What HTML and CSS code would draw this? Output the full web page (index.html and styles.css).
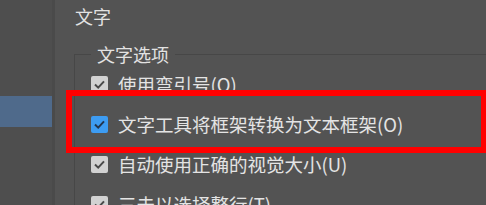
FILE: index.html
```html
<!DOCTYPE html>
<html lang="zh-CN">
    <head>
        <meta charset="UTF-8" />
        <title>首选项 - 文字</title>
        <link rel="stylesheet" href="styles.css">
    </head>
    <body>
        <div class="window">
            <div class="sidebar">
                <div class="side-item selected"></div>
            </div>
            <div class="divider"></div>
            <div class="panel">
                <div class="panel-title">文字</div>
                <fieldset class="group">
                    <legend>文字选项</legend>
                    <label class="option">
                        <span class="check"><svg viewBox="0 0 17 17"><path d="M4 8.5 L7.2 11.6 L13 5.4" /></svg></span>
                        使用弯引号(Q)
                    </label>
                    <label class="option">
                        <span class="check active"><svg viewBox="0 0 17 17"><path d="M4 8.5 L7.2 11.6 L13 5.4" /></svg></span>
                        文字工具将框架转换为文本框架(O)
                    </label>
                    <label class="option">
                        <span class="check"><svg viewBox="0 0 17 17"><path d="M4 8.5 L7.2 11.6 L13 5.4" /></svg></span>
                        自动使用正确的视觉大小(U)
                    </label>
                    <label class="option">
                        <span class="check"><svg viewBox="0 0 17 17"><path d="M4 8.5 L7.2 11.6 L13 5.4" /></svg></span>
                        三击以选择整行(T)
                    </label>
                </fieldset>
            </div>
        </div>
        <div class="highlight"></div>
    </body>
</html>
```

FILE: styles.css
```css
* {
    margin: 0;
    padding: 0;
    box-sizing: border-box;
    font-family: "Noto Sans CJK SC", "Noto Sans", sans-serif;
}

body {
    width: 486px;
    height: 205px;
    overflow: hidden;
    background: #535353;
    position: relative;
}

.window {
    display: flex;
    height: 205px;
}

.sidebar {
    width: 52px;
    background: #4e4e4e;
    padding-top: 96px;
}

.side-item {
    height: 31px;
}

.side-item.selected {
    background: #4f6a8b;
}

.divider {
    width: 3px;
    background: #4a4a4a;
}

.panel {
    flex: 1;
    padding: 4px 0 0 19px;
}

.panel-title {
    height: 24px;
    line-height: 24px;
    font-size: 18px;
    color: #e2e2e2;
    margin-left: 1px;
}

.group {
    margin-top: 16px;
    margin-right: -30px;
    border: 1px solid #474747;
    padding: 0 0 0 16px;
    min-width: 0;
}

.group legend {
    padding: 0 6px;
    font-size: 18px;
    line-height: 20px;
    color: #e2e2e2;
}

.option {
    display: flex;
    align-items: center;
    gap: 10px;
    height: 40px;
    font-size: 18.5px;
    color: #e4e4e4;
    white-space: nowrap;
}

.check {
    width: 17px;
    height: 17px;
    border-radius: 2px;
    background: #d2d2d2;
    display: flex;
    flex-shrink: 0;
}

.check svg {
    width: 17px;
    height: 17px;
}

.check path {
    fill: none;
    stroke: #4a4a4a;
    stroke-width: 2;
}

.check.active {
    background: #3d9cf2;
}

.check.active path {
    stroke: #23364f;
}

.highlight {
    position: absolute;
    left: 66px;
    top: 90px;
    width: 421px;
    height: 63px;
    border: 6px solid #ff0000;
}
```
